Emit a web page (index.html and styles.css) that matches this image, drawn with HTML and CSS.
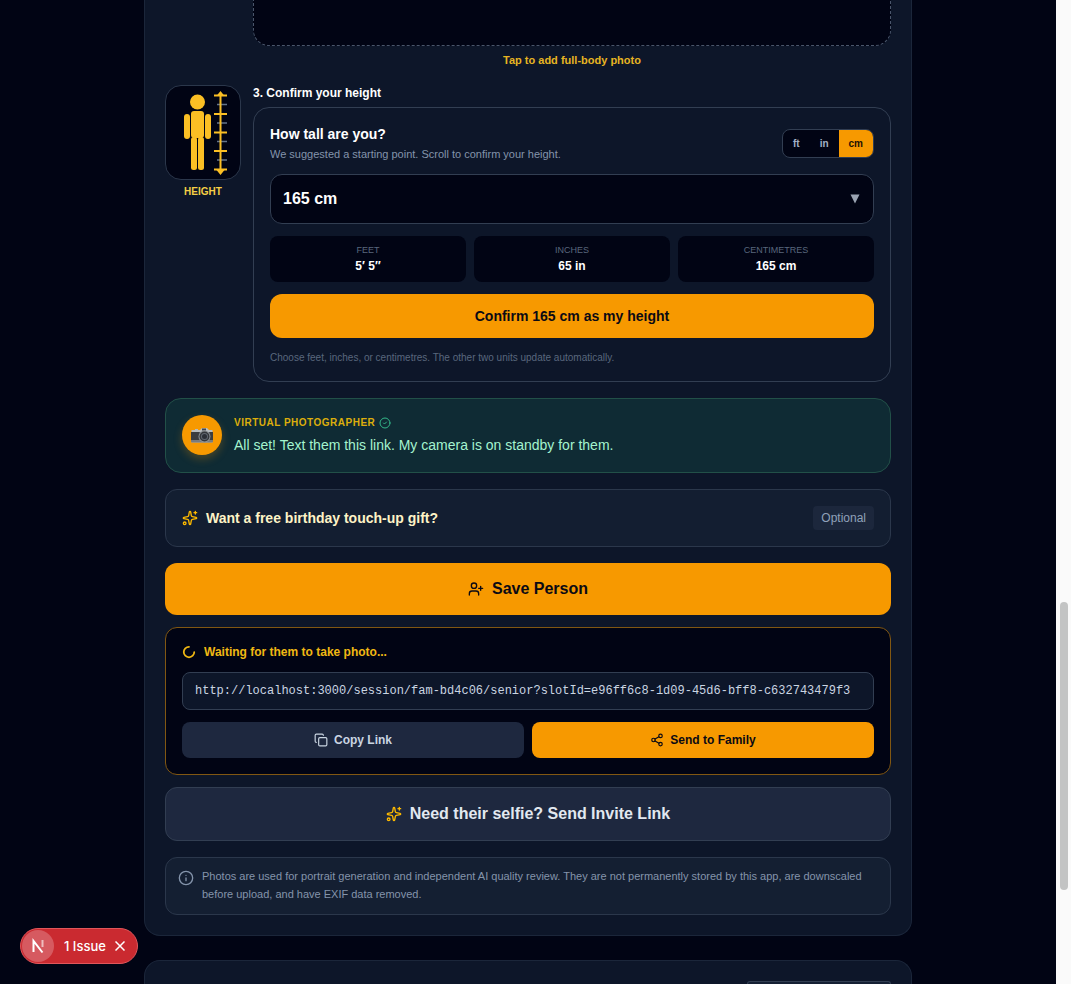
FILE: index.html
```html
<!DOCTYPE html>
<html lang="en">
<head>
    <meta charset="UTF-8">
    <meta name="viewport" content="width=device-width, initial-scale=1.0">
    <title>Add a Person</title>
    <link rel="stylesheet" href="styles.css">
</head>
<body>
    <main class="page">
        <section class="card card-person">
            <div class="step">
                <div class="step-guide"></div>
                <div class="step-body">
                    <button class="dropzone" type="button" aria-label="Add full-body photo"></button>
                    <p class="dropzone-hint">Tap to add full-body photo</p>
                </div>
            </div>

            <div class="step step-height">
                <div class="step-guide">
                    <div class="guide-picture">
                        <svg width="74" height="93" viewBox="0 0 74 93">
                            <g fill="#fbbf24">
                                <circle cx="31.500" cy="16" r="7.500"/>
                                <rect x="25" y="25" width="13" height="27" rx="3"/>
                                <rect x="18" y="28" width="6" height="25" rx="3"/>
                                <rect x="39" y="28" width="6" height="25" rx="3"/>
                                <rect x="25" y="51" width="6" height="33" rx="2.500"/>
                                <rect x="32" y="51" width="6" height="33" rx="2.500"/>
                                <path d="M54.500 5l4 5h-8zM54.500 89l4-5h-8z"/>
                            </g>
                            <path d="M51 18.500h10M51 37h10M51 55.500h10M51 74h10" stroke="#64748b" stroke-width="1.500"/>
                            <path d="M54.500 7v80M48 9.500h13M48 28h13M48 46.500h13M48 65h13M48 83.500h13" stroke="#fbbf24" stroke-width="2"/>
                        </svg>
                    </div>
                    <p class="guide-label">Height</p>
                </div>
                <div class="step-body">
                    <h3 class="step-title">3. Confirm your height</h3>
                    <div class="height-panel">
                        <div class="height-header">
                            <div>
                                <label class="height-question" for="height">How tall are you?</label>
                                <p class="height-sub">We suggested a starting point. Scroll to confirm your height.</p>
                            </div>
                            <div class="units">
                                <button type="button">ft</button>
                                <button type="button">in</button>
                                <button type="button" class="active">cm</button>
                            </div>
                        </div>
                        <div class="height-select">
                            <select id="height">
                                <option>165 cm</option>
                            </select>
                            <svg width="10" height="10" viewBox="0 0 10 10"><path d="M0.500 0.500h9L5 9.500z" fill="#9aa3b2"/></svg>
                        </div>
                        <div class="conversions">
                            <div class="conversion"><span>Feet</span><strong>5′ 5″</strong></div>
                            <div class="conversion"><span>Inches</span><strong>65 in</strong></div>
                            <div class="conversion"><span>Centimetres</span><strong>165 cm</strong></div>
                        </div>
                        <button type="button" class="btn btn-confirm">Confirm 165 cm as my height</button>
                        <p class="height-note">Choose feet, inches, or centimetres. The other two units update automatically.</p>
                    </div>
                </div>
            </div>

            <div class="photographer">
                <div class="avatar">
                    <svg width="24" height="20" viewBox="0 0 24 20">
                        <path d="M2 5h3V4h3v1h2l2-2h5l2 2h3.500v12.500H1.500V5z" fill="#b9bdc0"/>
                        <rect x="1" y="7" width="22" height="8.500" fill="#3b3d40"/>
                        <rect x="1" y="15" width="22" height="2.500" rx="1" fill="#777b7e"/>
                        <rect x="12" y="3.500" width="4" height="2" fill="#44474a"/>
                        <circle cx="14.500" cy="11.500" r="6" fill="#8d9296"/>
                        <circle cx="14.500" cy="11.500" r="5" fill="#34373b"/>
                        <circle cx="14.500" cy="11.500" r="3.500" fill="#5f666f"/>
                        <circle cx="14.500" cy="11.500" r="2.500" fill="#2b2f36"/>
                    </svg>
                </div>
                <div>
                    <p class="photographer-name">Virtual Photographer
                        <svg class="icon" width="12" height="12" viewBox="0 0 24 24" stroke="#34b98a"><circle cx="12" cy="12" r="10"/><path d="m9 12 2 2 4-4"/></svg>
                    </p>
                    <p class="photographer-text">All set! Text them this link. My camera is on standby for them.</p>
                </div>
            </div>

            <button type="button" class="gift">
                <svg class="icon" width="16" height="16" viewBox="0 0 24 24" stroke="#fcb900"><path d="M11.017 2.814a1 1 0 0 1 1.966 0l1.051 5.558a2 2 0 0 0 1.594 1.594l5.558 1.051a1 1 0 0 1 0 1.966l-5.558 1.051a2 2 0 0 0-1.594 1.594l-1.051 5.558a1 1 0 0 1-1.966 0l-1.051-5.558a2 2 0 0 0-1.594-1.594l-5.558-1.051a1 1 0 0 1 0-1.966l5.558-1.051a2 2 0 0 0 1.594-1.594z"/><path d="M20 2v4M22 4h-4"/><circle cx="4" cy="20" r="2"/></svg>
                <span class="gift-title">Want a free birthday touch-up gift?</span>
                <span class="tag">Optional</span>
            </button>

            <button type="button" class="btn btn-save">
                <svg class="icon" width="16" height="16" viewBox="0 0 24 24"><path d="M16 21v-2a4 4 0 0 0-4-4H6a4 4 0 0 0-4 4v2"/><circle cx="9" cy="7" r="4"/><path d="M19 8v6M22 11h-6"/></svg>
                Save Person
            </button>

            <div class="waiting">
                <p class="waiting-title">
                    <svg class="icon spinner" width="14" height="14" viewBox="0 0 24 24"><path d="M21 12a9 9 0 1 1-9-9"/></svg>
                    Waiting for them to take photo...
                </p>
                <input class="link-field" type="text" readonly aria-label="Session link" value="http://localhost:3000/session/fam-bd4c06/senior?slotId=e96ff6c8-1d09-45d6-bff8-c632743479f3">
                <div class="link-actions">
                    <button type="button" class="btn btn-small btn-copy">
                        <svg class="icon" width="14" height="14" viewBox="0 0 24 24"><rect x="8" y="8" width="14" height="14" rx="2"/><path d="M4 16c-1.100 0-2-.9-2-2V4c0-1.100.9-2 2-2h10c1.100 0 2 .9 2 2"/></svg>
                        Copy Link
                    </button>
                    <button type="button" class="btn btn-small">
                        <svg class="icon" width="14" height="14" viewBox="0 0 24 24"><circle cx="18" cy="5" r="3"/><circle cx="6" cy="12" r="3"/><circle cx="18" cy="19" r="3"/><path d="m8.590 13.510 6.830 3.980M15.410 6.510l-6.820 3.980"/></svg>
                        Send to Family
                    </button>
                </div>
            </div>

            <button type="button" class="btn btn-invite">
                <svg class="icon" width="16" height="16" viewBox="0 0 24 24" stroke="#fcb900"><path d="M11.017 2.814a1 1 0 0 1 1.966 0l1.051 5.558a2 2 0 0 0 1.594 1.594l5.558 1.051a1 1 0 0 1 0 1.966l-5.558 1.051a2 2 0 0 0-1.594 1.594l-1.051 5.558a1 1 0 0 1-1.966 0l-1.051-5.558a2 2 0 0 0-1.594-1.594l-5.558-1.051a1 1 0 0 1 0-1.966l5.558-1.051a2 2 0 0 0 1.594-1.594z"/><path d="M20 2v4M22 4h-4"/><circle cx="4" cy="20" r="2"/></svg>
                Need their selfie? Send Invite Link
            </button>

            <div class="privacy">
                <svg class="icon" width="16" height="16" viewBox="0 0 24 24"><circle cx="12" cy="12" r="10"/><path d="M12 16v-4M12 8h.01"/></svg>
                <p>Photos are used for portrait generation and independent AI quality review. They are not permanently stored by this app, are downscaled before upload, and have EXIF data removed.</p>
            </div>
        </section>

        <section class="card card-next">
            <button type="button" class="next-action" aria-label="More"></button>
        </section>
    </main>

    <div class="scrollbar"><div class="scrollbar-thumb"></div></div>

    <div class="dev-badge">
        <span class="dev-logo">
            <svg width="16" height="16" viewBox="0 0 16 16" fill="none" stroke="#fff" stroke-width="2"><path d="M3.500 14V3L12.500 14.500"/><path d="M12.500 2v7" stroke-opacity="0.600"/></svg>
        </span>
        <button type="button" class="dev-issues">1 Issue</button>
        <button type="button" class="dev-close" aria-label="Close">
            <svg width="10" height="10" viewBox="0 0 10 10" stroke="#fff" stroke-width="1.500"><path d="M0.500 0.500l9 9M9.500 0.500l-9 9"/></svg>
        </button>
    </div>
</body>
</html>
```
FILE: styles.css
```css
* {
    box-sizing: border-box;
}
body {
    display: flex;
    height: 100vh;
    margin: 0;
    overflow: hidden;
    background-color: #010414;
    color: #fff;
    font-family: "Liberation Sans", Arial, sans-serif;
    font-size: 14px;
    line-height: 20px;
}
p, h3 {
    margin: 0;
}
button, select, input {
    font-family: inherit;
    margin: 0;
    cursor: pointer;
}
svg {
    display: block;
    flex-shrink: 0;
}
.icon {
    fill: none;
    stroke-width: 2;
    stroke-linecap: round;
    stroke-linejoin: round;
}
.icon:not([stroke]) {
    stroke: currentColor;
}

/* page and cards */
.page {
    display: flex;
    flex-direction: column;
    align-items: center;
    gap: 24px;
    flex: 1;
    min-width: 0;
}
.card {
    display: flex;
    flex-direction: column;
    flex-shrink: 0;
    width: 100%;
    max-width: 768px;
    padding: 20px;
    background-color: #0d1629;
    border: 1px solid #1b263a;
    border-radius: 16px;
}
.card-person {
    padding-top: 0;
    border-top: none;
    border-top-left-radius: 0;
    border-top-right-radius: 0;
}
.card-next {
    flex: 1 1 0;
    align-items: flex-end;
    min-height: 0;
    padding-bottom: 0;
    border-bottom: none;
    border-bottom-left-radius: 0;
    border-bottom-right-radius: 0;
    overflow: hidden;
}
.next-action {
    flex: 1;
    width: 144px;
    min-height: 0;
    padding: 0;
    background-color: #141f33;
    border: 1px solid #323e52;
    border-bottom: none;
    border-radius: 12px 12px 0 0;
}

/* steps */
.step {
    display: grid;
    grid-template-columns: 76px 1fr;
    gap: 12px;
}
.step-height {
    margin: 17px 0 16px;
}
.dropzone {
    display: block;
    width: 100%;
    height: 46px;
    background-color: #010414;
    border: 1px dashed #4a566b;
    border-top: none;
    border-radius: 0 0 16px 16px;
}
.dropzone-hint {
    margin-top: 6px;
    color: #e6b422;
    font-size: 11px;
    font-weight: bold;
    line-height: 16px;
    text-align: center;
}
.guide-picture {
    height: 95px;
    background-color: #010414;
    border: 1px solid #2b374b;
    border-radius: 16px;
}
.guide-label {
    margin-top: 4px;
    color: #f5cf45;
    font-size: 10px;
    font-weight: bold;
    line-height: 15px;
    text-align: center;
    text-transform: uppercase;
}
.step-title {
    margin-bottom: 6px;
    font-size: 12px;
    line-height: 16px;
}

/* height picker */
.height-panel {
    display: flex;
    flex-direction: column;
    gap: 12px;
    padding: 16px;
    border: 1px solid #323e52;
    border-radius: 16px;
}
.height-header {
    display: flex;
    align-items: center;
    justify-content: space-between;
}
.height-question {
    display: block;
    font-weight: bold;
}
.height-sub {
    margin-top: 2px;
    color: #8494ab;
    font-size: 11px;
    line-height: 16px;
}
.units {
    display: flex;
    overflow: hidden;
    background-color: #010414;
    border: 1px solid #323e52;
    border-radius: 8px;
}
.units button {
    padding: 6px 10px;
    background: none;
    border: none;
    color: #a3b1c5;
    font-size: 10px;
    font-weight: bold;
    line-height: 15px;
}
.units .active {
    background-color: #f79900;
    color: #1c1206;
}
.height-select {
    position: relative;
}
.height-select select {
    display: block;
    width: 100%;
    height: 50px;
    padding: 0 12px 2px;
    appearance: none;
    background-color: #010414;
    border: 1px solid #323e52;
    border-radius: 12px;
    color: #fff;
    font-size: 16px;
    font-weight: bold;
}
.height-select svg {
    position: absolute;
    top: 20px;
    right: 14px;
    pointer-events: none;
}
.conversions {
    display: grid;
    grid-template-columns: repeat(3, 1fr);
    gap: 8px;
}
.conversion {
    display: flex;
    flex-direction: column;
    padding: 7px 8px 8px;
    background-color: #010414;
    border-radius: 8px;
    font-size: 12px;
    line-height: 16px;
    text-align: center;
}
.conversion span {
    color: #59677d;
    font-size: 9px;
    line-height: 15px;
    text-transform: uppercase;
}
.height-note {
    color: #59677d;
    font-size: 10px;
    line-height: 15px;
}

/* buttons */
.btn {
    display: flex;
    align-items: center;
    justify-content: center;
    gap: 8px;
    background-color: #f79900;
    border: none;
    border-radius: 12px;
    color: #0b0a14;
    font-size: 16px;
    font-weight: bold;
    line-height: 24px;
}
.btn-confirm {
    padding: 12px;
    font-size: 14px;
    line-height: 20px;
}
.btn-save {
    padding: 14px;
}
.btn-invite {
    padding: 14px;
    background-color: #1e283f;
    border: 1px solid #323e52;
    color: #e2e8f0;
}
.btn-small {
    flex: 1;
    gap: 6px;
    padding: 10px;
    border-radius: 8px;
    font-size: 12px;
    line-height: 16px;
}
.btn-copy {
    background-color: #1e283f;
    color: #cad5e2;
}

/* photographer message */
.photographer {
    display: flex;
    gap: 12px;
    padding: 16px;
    background-color: #0f2b34;
    border: 1px solid #225048;
    border-radius: 16px;
}
.avatar {
    display: flex;
    align-items: center;
    justify-content: center;
    width: 40px;
    height: 40px;
    background-color: #f79900;
    border-radius: 50%;
    box-shadow: 0 4px 8px rgba(248, 153, 0, 0.25);
}
.photographer-name {
    display: flex;
    align-items: center;
    gap: 4px;
    color: #dcae0c;
    font-size: 10px;
    font-weight: bold;
    letter-spacing: 0.05em;
    line-height: 15px;
    text-transform: uppercase;
}
.photographer-text {
    margin-top: 4px;
    color: #a4f4cf;
    line-height: 22px;
}

/* gift, link and privacy boxes */
.gift {
    display: flex;
    align-items: center;
    gap: 8px;
    margin: 16px 0;
    padding: 16px;
    background-color: #131e31;
    border: 1px solid #2b374b;
    border-radius: 12px;
    text-align: left;
}
.gift-title {
    flex: 1;
    color: #fef3c6;
    font-size: 14px;
    font-weight: bold;
    line-height: 20px;
}
.tag {
    padding: 4px 8px;
    background-color: #1c273c;
    border-radius: 4px;
    color: #90a1b9;
    font-size: 12px;
    line-height: 16px;
}
.waiting {
    display: flex;
    flex-direction: column;
    gap: 12px;
    margin: 12px 0;
    padding: 16px;
    background-color: #010414;
    border: 1px solid #815712;
    border-radius: 12px;
}
.waiting-title {
    display: flex;
    align-items: center;
    gap: 8px;
    color: #f0b813;
    font-size: 12px;
    font-weight: bold;
    line-height: 16px;
}
.spinner {
    stroke: #c4940f;
    stroke-width: 3;
}
.link-field {
    width: 100%;
    height: 38px;
    padding: 0 12px;
    background-color: #0d1629;
    border: 1px solid #323e52;
    border-radius: 8px;
    color: #cad5e2;
    font-family: "Liberation Mono", monospace;
    font-size: 12px;
}
.link-actions {
    display: flex;
    gap: 8px;
}
.privacy {
    display: flex;
    gap: 8px;
    margin-top: 16px;
    padding: 9px 12px 11px;
    background-color: #141f32;
    border: 1px solid #2b374b;
    border-radius: 12px;
    color: #8494ab;
    font-size: 11px;
    line-height: 18px;
}
.privacy svg {
    margin-top: 3px;
}

/* scrollbar */
.scrollbar {
    position: relative;
    width: 15px;
    background-color: #fafafa;
}
.scrollbar-thumb {
    position: absolute;
    top: 61.2%;
    left: 4px;
    width: 8px;
    height: 29.2%;
    background-color: #c3c4c4;
    border-radius: 4px;
}

/* dev overlay badge */
.dev-badge {
    position: fixed;
    left: 20px;
    bottom: 20px;
    display: flex;
    align-items: center;
    height: 36px;
    padding: 0 12px 0 1px;
    background-color: #ca2a30;
    border: 1px solid #e0565b;
    border-radius: 18px;
}
.dev-logo {
    display: flex;
    align-items: center;
    justify-content: center;
    width: 32px;
    height: 32px;
    background-color: #d65a60;
    border-radius: 50%;
}
.dev-badge button {
    padding: 0;
    background: none;
    border: none;
    color: #fff;
}
.dev-badge .dev-issues {
    margin: 0 9px 0 10px;
    font-family: Inter, sans-serif;
    font-size: 13px;
    font-weight: 500;
}
```
